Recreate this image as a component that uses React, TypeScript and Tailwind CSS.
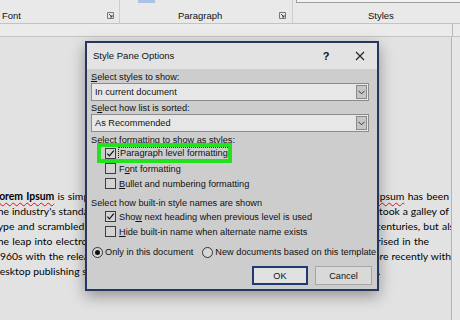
import React from 'react';

const ui = { fontFamily: '"Liberation Sans", Arial, sans-serif' };
const doc = { fontFamily: 'Lato, "Liberation Sans", sans-serif' };

const Launcher = () => (
  <svg width="7" height="7" viewBox="0 0 7 7" className="shrink-0">
    <path d="M0.5 0.5 H6.5 V6.5 H0.5 Z" fill="none" stroke="#777" strokeWidth="1" />
    <path d="M2 2 L5 5 M5 3 V5 H3" fill="none" stroke="#444" strokeWidth="1" />
  </svg>
);

const CheckBox = ({ checked }: { checked?: boolean }) => (
  <span className="flex h-[11px] w-[11px] shrink-0 items-center justify-center border border-[#3c3c3c] bg-[#d3d3d3]">
    {checked && (
      <svg width="9" height="9" viewBox="0 0 9 9">
        <path d="M1.3 4.6 L3.4 6.9 L7.8 1.6" fill="none" stroke="#111" strokeWidth="1.2" />
      </svg>
    )}
  </span>
);

const Radio = ({ checked }: { checked?: boolean }) => (
  <span className="flex h-[11px] w-[11px] shrink-0 items-center justify-center rounded-full border border-[#333] bg-[#d6d6d6]">
    {checked && <span className="h-[5px] w-[5px] rounded-full bg-[#111]" />}
  </span>
);

const Dropdown = ({ children }: { children: React.ReactNode }) => (
  <div className="flex h-[18px] items-center justify-between border border-[#8c8c8c] bg-[#e7e7e7] pl-[3px] pr-[1px]">
    <span>{children}</span>
    <span className="flex h-[14px] w-[11px] items-center justify-center border border-[#8a8a8a] bg-[#c6c6c6]">
      <svg width="7" height="5" viewBox="0 0 7 5">
        <path d="M0.5 0.8 L3.5 3.8 L6.5 0.8" fill="none" stroke="#333" strokeWidth="1" />
      </svg>
    </span>
  </div>
);

const Sq = ({ children }: { children: React.ReactNode }) => (
  <span className="underline decoration-wavy decoration-[#d11] decoration-1 underline-offset-2">{children}</span>
);

const justify = 'whitespace-nowrap text-justify [text-align-last:justify]';

export default function App() {
  return (
    <div className="relative h-[320px] w-[460px] overflow-hidden bg-[#e2e2e2] text-[#111]">
      {/* Ribbon */}
      <div className="flex h-[24px] border-b border-[#c3c3c3] bg-[#e9e9e9] text-[9.5px]" style={ui}>
        <div className="flex w-[120px] flex-col border-r border-[#cdcdcd]">
          <div className="h-[11px]" />
          <div className="flex items-center justify-between pl-[2px] pr-[5px]">
            <span>Font</span>
            <Launcher />
          </div>
        </div>
        <div className="flex w-[173px] flex-col border-r border-[#cdcdcd]">
          <div className="flex h-[11px]">
            <div className="ml-[18px] h-[3px] w-[17px] bg-[#a9c2e6]" />
          </div>
          <div className="flex items-center justify-between pr-[6px]">
            <span className="ml-[58px]">Paragraph</span>
            <Launcher />
          </div>
        </div>
        <div className="flex flex-1 flex-col">
          <div className="ml-[3px] h-[4px] border-b border-l border-[#9e9e9e] bg-[#f3f3f3]" />
          <div className="h-[7px]" />
          <div className="pl-[75px]">Styles</div>
        </div>
      </div>
      <div className="flex h-[13px] border-b border-[#c4c4c4] bg-[#ebebeb]">
        <div className="flex-1" />
        <div className="w-[8px] border-l border-[#b8b8b8]" />
      </div>

      {/* Document */}
      <div className="flex h-[283px]">
        <div className="w-[452px] overflow-hidden border-r border-[#b5b5b5] pt-[152px] text-[10.4px] leading-[15px] text-black" style={doc}>
          <div className="-ml-[6px]">
            <div className={`${justify} w-[455px]`}>
              <b><Sq>Lorem Ipsum</Sq></b> is simply dummy text of the printing and typesetting industry. <Sq>Lorem</Sq> <Sq>Ipsum</Sq> has been
            </div>
            <div className={`${justify} w-[455px]`}>
              the industry's standard dummy text ever since the 1500s, when an unknown printer took a galley of
            </div>
            <div className={`${justify} w-[466px]`}>
              type and scrambled it to make a type specimen book. It has survived not only five centuries, but also
            </div>
            <div className={`${justify} w-[435px]`}>
              the leap into electronic typesetting, remaining essentially unchanged. It was popularised in the
            </div>
            <div className={`${justify} w-[457px]`}>
              1960s with the release of Letraset sheets containing <Sq>Lorem</Sq> <Sq>Ipsum</Sq> passages, and more recently with
            </div>
            <div className="whitespace-nowrap">
              desktop publishing software like Aldus PageMaker including versions of <Sq>Lorem</Sq> <Sq>Ipsum</Sq>.
            </div>
          </div>
        </div>
        <div className="flex-1 bg-[#e6e6e6]" />
      </div>

      {/* Dialog */}
      <div
        className="absolute left-[85px] top-[41px] flex h-[250px] w-[294px] flex-col border-2 border-[#24385e] bg-[#cdcdcd] text-[9.2px] leading-[12px] text-[#111] shadow-[0_5px_14px_rgba(0,0,0,0.35)]"
        style={ui}
      >
        <div className="flex h-[26px] shrink-0 items-center bg-[#e3e3e3] pl-[6px] text-[9.5px]">
          <span className="flex-1">Style Pane Options</span>
          <span className="w-[12px] text-center text-[11px] font-bold">?</span>
          <span className="ml-[22px] mr-[11px] flex w-[12px] justify-center">
            <svg width="10" height="10" viewBox="0 0 10 10">
              <path d="M1 1 L9 9 M9 1 L1 9" stroke="#222" strokeWidth="1.1" />
            </svg>
          </span>
        </div>

        <div className="flex flex-col pl-[4px] pr-[8px] pt-[2px]">
          <div className="h-[12px]"><span className="underline">S</span>elect styles to show:</div>
          <Dropdown>In current document</Dropdown>
          <div className="mt-[1px] h-[12px]">S<span className="underline">e</span>lect how list is sorted:</div>
          <Dropdown>As Recommended</Dropdown>
          <div className="mt-[2px] h-[12px]">Select formatting to show as styles:</div>

          <div className="relative flex h-[15px] items-center pl-[14px]">
            <div className="pointer-events-none absolute left-[6px] top-[-3px] h-[20px] w-[135px] border-[4px] border-[#22e21f]" />
            <CheckBox checked />
            <span className="ml-[2px] border border-dotted border-[#222] px-[1px] leading-[11px]">Paragraph level formatting</span>
          </div>
          <div className="flex h-[15px] items-center gap-[3px] pl-[14px]">
            <CheckBox />
            <span>F<span className="underline">o</span>nt formatting</span>
          </div>
          <div className="flex h-[15px] items-center gap-[3px] pl-[14px]">
            <CheckBox />
            <span><span className="underline">B</span>ullet and numbering formatting</span>
          </div>

          <div className="mt-[6px] h-[12px]">Select how built-in style names are shown</div>
          <div className="flex h-[15px] items-center gap-[3px] pl-[14px]">
            <CheckBox checked />
            <span>Sho<span className="underline">w</span> next heading when previous level is used</span>
          </div>
          <div className="flex h-[15px] items-center gap-[3px] pl-[14px]">
            <CheckBox />
            <span><span className="underline">H</span>ide built-in name when alternate name exists</span>
          </div>

          <div className="mt-[5px] flex h-[16px] items-center whitespace-nowrap pl-[1px]">
            <Radio checked />
            <span className="ml-[2px]">Only in this document</span>
            <span className="ml-[9px]"><Radio /></span>
            <span className="ml-[2px]">New documents based on this template</span>
          </div>

          <div className="-mr-[3px] mt-[6px] flex justify-end gap-[7px]">
            <button className="flex h-[19px] w-[56px] items-center justify-center border-2 border-[#1d3c6f] bg-[#e1e1e1]">OK</button>
            <button className="flex h-[19px] w-[57px] items-center justify-center border border-[#a6a6a6] bg-[#d9d9d9]">Cancel</button>
          </div>
        </div>
      </div>
    </div>
  );
}
